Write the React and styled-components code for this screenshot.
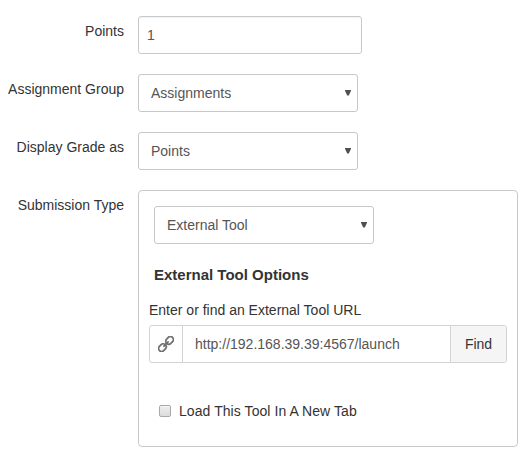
import React from "react";
import styled, { createGlobalStyle } from "styled-components";

const GlobalStyle = createGlobalStyle`
  * { box-sizing: border-box; }
  body {
    margin: 0;
    background: #fff;
    color: #333;
    font: 14px/20px "Liberation Sans", Arial, sans-serif;
  }
  input, select, button { font: inherit; margin: 0; }
`;

const Form = styled.form`
  display: flex;
  flex-direction: column;
  gap: 20px;
  width: 518px;
  padding-top: 16px;
`;

const Row = styled.div`
  display: grid;
  grid-template-columns: 124px 380px;
  column-gap: 14px;
  align-items: start;
`;

const Label = styled.label`
  padding-top: 5px;
  text-align: right;
  white-space: nowrap;
`;

const TextInput = styled.input`
  width: 224px;
  height: 38px;
  padding: 0 8px;
  border: 1px solid #c7cacc;
  border-radius: 3px;
  color: #555;
  background: #fff;
  box-shadow: inset 0 1px 1px rgba(0, 0, 0, 0.05);
  outline: none;
`;

const SelectBox = styled.div`
  display: grid;
  width: 220px;
  height: 38px;
  align-items: center;
`;

const NativeSelect = styled.select`
  grid-area: 1 / 1;
  width: 100%;
  height: 38px;
  padding: 0 12px;
  border: 1px solid #c8c8c8;
  border-radius: 3px;
  color: #555;
  background: #fff;
  appearance: none;
  outline: none;
`;

const Arrow = styled.svg`
  grid-area: 1 / 1;
  justify-self: end;
  width: 6px;
  height: 6px;
  margin-right: 7px;
  pointer-events: none;
`;

const Panel = styled.section`
  height: 257px;
  padding: 15px 10px;
  border: 1px solid #c8c8c8;
  border-radius: 4px;
`;

const PanelSelect = styled.div`
  padding-left: 5px;
`;

const Heading = styled.h3`
  margin: 21px 0 15px 5px;
  font-size: 15px;
  line-height: 20px;
`;

const UrlLabel = styled.label`
  display: block;
  margin-bottom: 5px;
`;

const UrlGroup = styled.div`
  display: flex;
  width: 358px;
  height: 38px;
  border: 1px solid #d3d3d3;
  border-radius: 3px;
  overflow: hidden;
`;

const IconCell = styled.span`
  display: flex;
  flex: 0 0 33px;
  align-items: center;
  justify-content: center;
  border-right: 1px solid #d3d3d3;
`;

const UrlInput = styled.input`
  flex: 1;
  min-width: 0;
  padding: 0 12px;
  border: 0;
  color: #555;
  background: #fff;
  outline: none;
`;

const FindButton = styled.button`
  flex: 0 0 56px;
  padding: 0;
  border: 0;
  border-left: 1px solid #d3d3d3;
  color: #333;
  background: #f5f5f5;
`;

const CheckRow = styled.label`
  display: flex;
  align-items: center;
  gap: 8px;
  margin: 38px 0 0 10px;
  letter-spacing: 0.07px;
`;

const Checkbox = styled.input`
  width: 12px;
  height: 12px;
  appearance: none;
  border: 1px solid #a9a9a9;
  border-radius: 2px;
  background: linear-gradient(#eeeeee, #dcdcdc);
  box-shadow: inset 0 1px 0 #f6f6f6;
`;

function Select({ id, value }) {
  return (
    <SelectBox>
      <NativeSelect id={id} defaultValue={value}>
        <option>{value}</option>
      </NativeSelect>
      <Arrow viewBox="0 0 6 6">
        <path d="M0 0H6V0.7L3.8 5.6H2.2L0 0.7Z" fill="#505050" />
      </Arrow>
    </SelectBox>
  );
}

function LinkIcon() {
  return (
    <svg width="16" height="16" viewBox="0 0 16 16" fill="none" stroke="#707070" strokeWidth="1.8">
      <g transform="rotate(-45 8 8)">
        <rect x="-1.2" y="5" width="8.2" height="6" rx="2.9" />
        <rect x="9" y="5" width="8.2" height="6" rx="2.9" />
        <path d="M5 8H11" strokeLinecap="round" />
      </g>
    </svg>
  );
}

export default function App() {
  return (
    <>
      <GlobalStyle />
      <Form>
        <Row>
          <Label htmlFor="points">Points</Label>
          <TextInput id="points" defaultValue="1" />
        </Row>
        <Row>
          <Label htmlFor="group">Assignment Group</Label>
          <Select id="group" value="Assignments" />
        </Row>
        <Row>
          <Label htmlFor="grade">Display Grade as</Label>
          <Select id="grade" value="Points" />
        </Row>
        <Row>
          <Label htmlFor="type">Submission Type</Label>
          <Panel>
            <PanelSelect>
              <Select id="type" value="External Tool" />
            </PanelSelect>
            <Heading>External Tool Options</Heading>
            <UrlLabel htmlFor="url">Enter or find an External Tool URL</UrlLabel>
            <UrlGroup>
              <IconCell>
                <LinkIcon />
              </IconCell>
              <UrlInput id="url" defaultValue="http://192.168.39.39:4567/launch" />
              <FindButton type="button">Find</FindButton>
            </UrlGroup>
            <CheckRow>
              <Checkbox type="checkbox" />
              Load This Tool In A New Tab
            </CheckRow>
          </Panel>
        </Row>
      </Form>
    </>
  );
}
